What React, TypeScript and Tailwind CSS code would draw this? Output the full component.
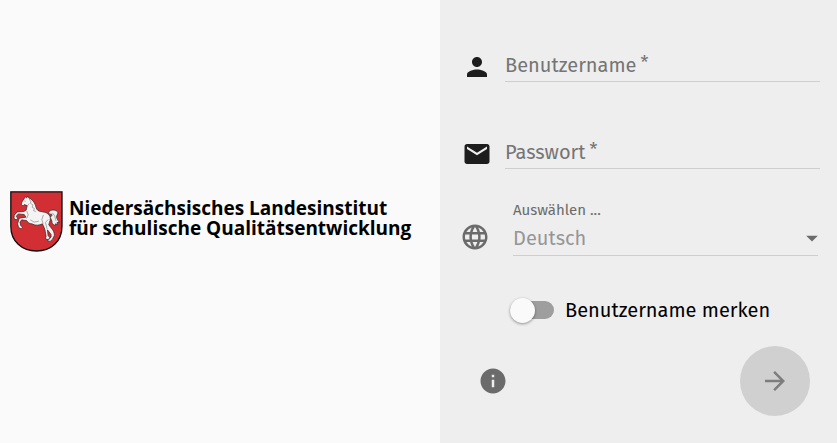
import { useState } from 'react';
import type { ReactNode } from 'react';
import { MdArrowDropDown, MdArrowForward, MdEmail, MdInfo, MdLanguage, MdPerson } from 'react-icons/md';

function CoatOfArms() {
  return (
    <svg viewBox="30 32 160 184" className="h-[61px] w-[53px] shrink-0" aria-hidden="true">
      <path d="M32.500 34.500H187V138C187 184 154 213 110 213C66 213 32.500 184 32.500 138Z" fill="#d22f35" stroke="#111" strokeWidth="4" />
      {/* tail */}
      <path d="M147 108C153 113 157 120 157 129L165 137L167 131L173 134L172 127L179 127C173 118 169 112 171 107L175 98C171 88 157 87 149 93C145 97 147 102 153 102C158 101 158 106 154 109Z" fill="#eee" stroke="#2b2020" strokeWidth="2" />
      {/* body and legs */}
      <path
        d="M64 72L66 65L73 55L76 49L80 53L84 47L87 53C96 56 104 66 107 76C109 85 112 91 119 93C130 96 139 95 147 103C153 109 153 118 149 127L147 134L155 144C161 151 164 158 164 166L158 178L151 184L143 182L147 176L154 171L154 163L143 149L145 167L152 174L146 179L137 176L139 168L135 147L128 131C117 136 107 137 96 131C89 131 84 127 80 121L65 119L60 126L62 136L68 141L63 146L56 142L53 131L58 114L78 111L73 103L55 101L49 108L53 114L49 119L42 115L43 105L52 95L72 94L79 89L82 76L73 73L69 77Z"
        fill="#f4f4f4"
        stroke="#2b2020"
        strokeWidth="2"
        strokeLinejoin="round"
      />
      <path d="M87 55L94 65L91 68L99 74L97 81L104 85L101 91L108 94M80 91L85 104L80 115M91 119L103 126L117 123M131 104L126 118L130 131M145 118L137 127L142 146M73 62L77 63M83 76L88 70M158 98L165 107L169 122" fill="none" stroke="#8a8080" strokeWidth="2" />
    </svg>
  );
}

type FieldProps = {
  id: string;
  label: string;
  type: string;
  icon: ReactNode;
};

function Field({ id, label, type, icon }: FieldProps) {
  const [value, setValue] = useState('');

  return (
    <div className="flex h-[34px] items-end gap-[13px] pr-[17px] pl-[22px] text-[#1d1d1d]">
      {icon}
      <div className="relative h-full flex-1">
        <input
          id={id}
          type={type}
          value={value}
          onChange={(e) => setValue(e.target.value)}
          className="h-full w-full border-b border-[#cecece] bg-transparent text-xl outline-none"
        />
        {!value && (
          <label htmlFor={id} className="pointer-events-none absolute top-0 left-0 flex gap-1 text-xl leading-[34px] text-[#757575]">
            {label}
            <span className="text-lg leading-[30px]">*</span>
          </label>
        )}
      </div>
    </div>
  );
}

export default function App() {
  const [remember, setRemember] = useState(false);

  return (
    <main className="grid min-h-screen grid-cols-[440fr_397fr] bg-[#fafafa] font-['Fira_Sans','Noto_Sans',sans-serif]">
      <section className="flex items-center gap-1.5 pl-2.5">
        <CoatOfArms />
        <h1 className="pb-2 font-['Open_Sans',sans-serif] text-[19px] leading-5 font-bold whitespace-nowrap text-black">
          Niedersächsisches Landesinstitut
          <br />
          für schulische Qualitätsentwicklung
        </h1>
      </section>

      <form className="flex flex-col bg-[#eeeeee] pt-12" onSubmit={(e) => e.preventDefault()}>
        <Field id="username" label="Benutzername" type="text" icon={<MdPerson size={30} />} />
        <div className="h-[53px]" />
        <Field id="password" label="Passwort" type="password" icon={<MdEmail size={30} />} />

        <div className="mt-[31px] flex items-center gap-[23px] pr-[19px] pl-5 text-[#6b6b6b]">
          <MdLanguage size={30} className="mt-[18px]" />
          <div className="relative flex-1">
            <label htmlFor="language" className="block text-[15px] leading-5">
              Auswählen ...
            </label>
            <select
              id="language"
              className="h-9 w-full appearance-none border-b border-[#cecece] bg-transparent text-xl text-[#969696] outline-none"
            >
              <option>Deutsch</option>
              <option>English</option>
            </select>
            <MdArrowDropDown size={28} className="pointer-events-none absolute -right-2 bottom-1" />
          </div>
        </div>

        <label className="mt-10 ml-[70px] flex h-[28px] items-center gap-[11px] text-xl text-black">
          <input type="checkbox" checked={remember} onChange={(e) => setRemember(e.target.checked)} className="peer sr-only" />
          <span className="flex h-[18px] w-11 items-center rounded-full bg-[#9e9e9e] peer-checked:justify-end">
            <span className="size-[25px] rounded-full bg-[#fafafa] shadow-[0_1px_3px_rgba(0,0,0,0.4)]" />
          </span>
          Benutzername merken
        </label>

        <div className="mt-[22px] flex items-center justify-between pr-[27px] pl-[38px]">
          <button type="button" aria-label="Information" className="text-[#6b6b6b]">
            <MdInfo size={30} />
          </button>
          <button type="submit" aria-label="Anmelden" className="flex size-[70px] items-center justify-center rounded-full bg-[#d0d0d0] text-[#7d7d7d]">
            <MdArrowForward size={30} />
          </button>
        </div>
      </form>
    </main>
  );
}
